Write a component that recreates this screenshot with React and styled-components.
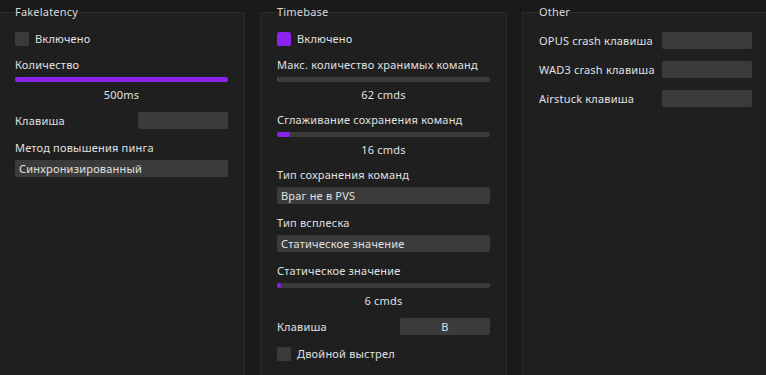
import React from "react";
import styled, { createGlobalStyle } from "styled-components";

const GlobalStyle = createGlobalStyle`
  html, body {
    margin: 0;
    padding: 0;
    background: #1a1a1a;
    overflow: hidden;
  }
  body {
    font-family: "Noto Sans", "Open Sans", sans-serif;
    font-size: 11px;
    letter-spacing: 0.2px;
    color: #e0e0e0;
  }
`;

const Page = styled.div`
  display: flex;
  gap: 15px;
  margin-left: -2px;
  padding-top: 4px;
  width: 800px;
`;

const Panel = styled.fieldset`
  box-sizing: border-box;
  flex: 0 0 247px;
  width: 247px;
  min-width: 0;
  height: 400px;
  margin: 0;
  padding: 12px 16px 0 16px;
  border: 1px solid #2b2b2b;
  background: #1f1f1f;
`;

const Title = styled.legend`
  padding: 0;
  line-height: 16px;
  color: #d8d8d8;
`;

const Column = styled.div`
  display: flex;
  flex-direction: column;
  gap: ${(p) => p.$gap || 11}px;
`;

const Item = styled.div`
  display: flex;
  flex-direction: column;
  gap: 4px;
`;

const Label = styled.div`
  line-height: 16px;
  white-space: nowrap;
`;

const CheckRow = styled.div`
  display: flex;
  align-items: center;
  gap: 6px;
  height: 14px;
  line-height: 14px;
  margin-top: ${(p) => (p.$after ? 1 : 0)}px;
`;

const Box = styled.div`
  width: 14px;
  height: 14px;
  border-radius: 2px;
  background: ${(p) => (p.$on ? "#8b23ee" : "#3b3b3b")};
`;

const Track = styled.div`
  height: 5px;
  border-radius: 2px;
  background: #3b3b3b;
  overflow: hidden;
`;

const Fill = styled.div`
  height: 100%;
  border-radius: 2px;
  background: #8b23ee;
`;

const Value = styled.div`
  margin-top: 2px;
  line-height: 13px;
  text-align: center;
`;

const KeyRow = styled.div`
  display: flex;
  align-items: center;
  justify-content: space-between;
  height: 17px;
`;

const KeyBox = styled.div`
  width: 90px;
  height: 17px;
  line-height: 17px;
  border-radius: 2px;
  background: #3b3b3b;
  text-align: center;
`;

const Combo = styled.div`
  height: 17px;
  line-height: 17px;
  padding-left: 4px;
  border-radius: 2px;
  background: #3b3b3b;
  white-space: nowrap;
`;

function Checkbox({ on, after, children }) {
  return (
    <CheckRow $after={after}>
      <Box $on={on} />
      <span>{children}</span>
    </CheckRow>
  );
}

function SliderItem({ label, pct, text }) {
  return (
    <Item>
      <Label>{label}</Label>
      <Track>
        <Fill style={{ width: `${pct}%` }} />
      </Track>
      <Value>{text}</Value>
    </Item>
  );
}

function Key({ label, value }) {
  return (
    <KeyRow>
      <Label>{label}</Label>
      <KeyBox>{value}</KeyBox>
    </KeyRow>
  );
}

function Select({ label, value }) {
  return (
    <Item>
      <Label>{label}</Label>
      <Combo>{value}</Combo>
    </Item>
  );
}

export default function App() {
  return (
    <>
      <GlobalStyle />
      <Page>
        <Panel>
          <Title>Fakelatency</Title>
          <Column>
            <Checkbox>Включено</Checkbox>
            <SliderItem label="Количество" pct={100} text="500ms" />
            <Key label="Клавиша" value="" />
            <Select label="Метод повышения пинга" value="Синхронизированный" />
          </Column>
        </Panel>
        <Panel>
          <Title>Timebase</Title>
          <Column>
            <Checkbox on>Включено</Checkbox>
            <SliderItem label="Макс. количество хранимых команд" pct={0.6} text="62 cmds" />
            <SliderItem label="Сглаживание сохранения команд" pct={6.1} text="16 cmds" />
            <Select label="Тип сохранения команд" value="Враг не в PVS" />
            <Select label="Тип всплеска" value="Статическое значение" />
            <SliderItem label="Статическое значение" pct={1.9} text="6 cmds" />
            <Key label="Клавиша" value="B" />
            <Checkbox after>Двойной выстрел</Checkbox>
          </Column>
        </Panel>
        <Panel>
          <Title>Other</Title>
          <Column $gap={12}>
            <Key label="OPUS crash клавиша" value="" />
            <Key label="WAD3 crash клавиша" value="" />
            <Key label="Airstuck клавиша" value="" />
          </Column>
        </Panel>
      </Page>
    </>
  );
}
